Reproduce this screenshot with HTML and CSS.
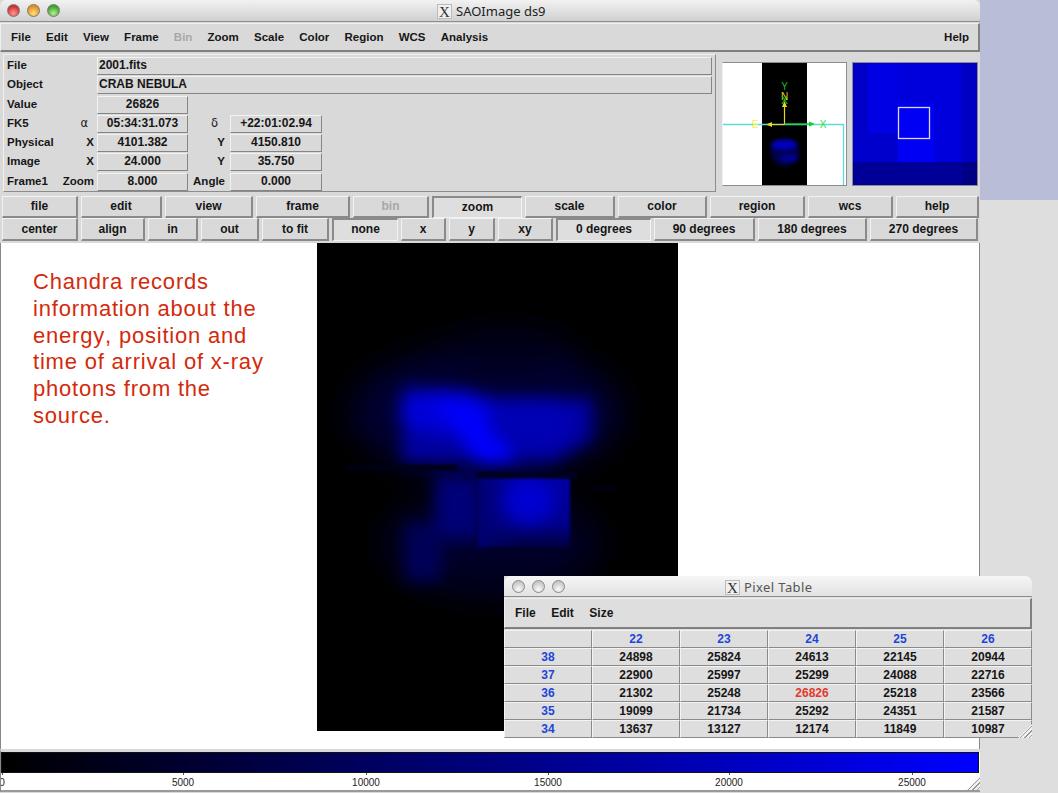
FILE: index.html
```html
<!DOCTYPE html>
<html lang="en">
<head>
  <meta charset="UTF-8">
  <title>SAOImage ds9</title>
  <link rel="stylesheet" href="styles.css">
</head>
<body>
  <div class="desk-tint"></div>

  <div class="ds9">
    <div class="titlebar">
      <span class="light red"></span><span class="light yellow"></span><span class="light green"></span>
      <div class="title"><span class="x-icon">X</span>SAOImage ds9</div>
    </div>

    <div class="menubar">
      <span>File</span><span>Edit</span><span>View</span><span>Frame</span><span class="off">Bin</span>
      <span>Zoom</span><span>Scale</span><span>Color</span><span>Region</span><span>WCS</span><span>Analysis</span>
      <span class="help">Help</span>
    </div>

    <div class="info-row">
      <div class="info">
        <div class="lab">File</div><div class="val wide left">2001.fits</div>
        <div class="lab">Object</div><div class="val wide left">CRAB NEBULA</div>
        <div class="lab">Value</div><div class="lab2"></div><div class="val">26826</div><div class="rest"></div>
        <div class="lab">FK5</div><div class="lab2 sym">&alpha;</div><div class="val">05:34:31.073</div><div class="lab3 sym">&delta;</div><div class="val">+22:01:02.94</div><div></div>
        <div class="lab">Physical</div><div class="lab2">X</div><div class="val">4101.382</div><div class="lab3">Y</div><div class="val">4150.810</div><div></div>
        <div class="lab">Image</div><div class="lab2">X</div><div class="val">24.000</div><div class="lab3">Y</div><div class="val">35.750</div><div></div>
        <div class="lab">Frame1</div><div class="lab2">Zoom</div><div class="val">8.000</div><div class="lab3">Angle</div><div class="val">0.000</div><div></div>
      </div>

      <svg class="panner" viewBox="0 0 123 122" width="123" height="122">
        <defs><filter id="soft"><feGaussianBlur stdDeviation="2"/></filter></defs>
        <rect width="123" height="122" fill="#fff"/>
        <rect x="39" width="45" height="122" fill="#000"/>
        <ellipse cx="62" cy="89" rx="14" ry="14" fill="#000050" filter="url(#soft)"/>
        <ellipse cx="61" cy="82" rx="13" ry="5" fill="#0000c0" filter="url(#soft)"/>
        <ellipse cx="66" cy="95" rx="9" ry="4" fill="#000098" filter="url(#soft)"/>
        <path d="M0 61.500H120.500V122" fill="none" stroke="#5fd8e0" stroke-width="1.300"/>
        <path d="M61.500 61.500V43M61.500 61.500H44" fill="none" stroke="#e8d820" stroke-width="1.200"/>
        <path d="M61.500 38l-2.500 6h5zM43 61.500l6-2.500v5z" fill="#e8d820"/>
        <path d="M61.500 61H87" stroke="#10d020" stroke-width="1.300"/>
        <path d="M92 61l-6-2.500v5z" fill="#10d020"/>
        <text x="61.500" y="27" class="pan-text" fill="#10c020">Y</text>
        <text x="61.500" y="37" class="pan-text" fill="#e8d820">N</text>
        <text x="61.500" y="41" class="pan-text" fill="#10d020">X</text>
        <text x="32" y="65" class="pan-text" fill="#f0f040">E</text>
        <text x="100" y="65" class="pan-text" fill="#30e040">X</text>
      </svg>

      <svg class="magnifier" viewBox="0 0 124 122" width="124" height="122">
        <rect width="124" height="122" fill="#0000dc"/>
        <rect x="0" width="15" height="100" fill="#0000c8"/>
        <rect x="15" width="30" height="70" fill="#0000e4"/>
        <rect x="108" width="16" height="100" fill="#0000c4"/>
        <rect x="45" y="40" width="36" height="59" fill="#0000f4"/>
        <rect x="0" y="70" width="45" height="29" fill="#0000cc"/>
        <rect x="0" y="99" width="124" height="23" fill="#000098"/>
        <rect x="110" y="99" width="14" height="23" fill="#000084"/>
        <rect x="45.500" y="44.500" width="31" height="31" fill="none" stroke="#d8d8e8" stroke-width="1.300"/>
      </svg>
    </div>

    <div class="btn-row row-one">
      <div class="btn">file</div><div class="btn">edit</div><div class="btn">view</div><div class="btn">frame</div>
      <div class="btn off">bin</div><div class="btn on">zoom</div><div class="btn">scale</div><div class="btn">color</div>
      <div class="btn">region</div><div class="btn">wcs</div><div class="btn">help</div>
    </div>
    <div class="btn-row row-two">
      <div class="btn">center</div><div class="btn">align</div><div class="btn">in</div><div class="btn">out</div>
      <div class="btn">to fit</div><div class="btn on">none</div><div class="btn">x</div><div class="btn">y</div>
      <div class="btn">xy</div><div class="btn on">0 degrees</div><div class="btn">90 degrees</div>
      <div class="btn">180 degrees</div><div class="btn">270 degrees</div>
    </div>

    <div class="canvas">
      <p class="note">Chandra records information about the energy, position and time of arrival of x-ray photons from the source.</p>
      <svg class="fits" viewBox="0 0 361 488" width="361" height="488">
        <defs>
          <filter id="wide" x="-40%" y="-40%" width="180%" height="180%"><feGaussianBlur stdDeviation="16"/></filter>
          <filter id="body" x="-30%" y="-30%" width="160%" height="160%"><feGaussianBlur stdDeviation="8"/></filter>
          <filter id="mid" x="-40%" y="-40%" width="180%" height="180%"><feGaussianBlur stdDeviation="8"/></filter>
          <filter id="tight" x="-10%" y="-10%" width="120%" height="120%"><feGaussianBlur stdDeviation="1.500"/></filter>
          <filter id="line" x="-5%" y="-100%" width="110%" height="300%"><feGaussianBlur stdDeviation="0.800"/></filter>
          <linearGradient id="box-fade" x1="0" y1="0" x2="0" y2="1">
            <stop offset="0" stop-color="#0000a4"/>
            <stop offset="0.650" stop-color="#00008c"/>
            <stop offset="1" stop-color="#000040"/>
          </linearGradient>
          <linearGradient id="box-side" x1="0" y1="0" x2="1" y2="0">
            <stop offset="0" stop-color="#000070" stop-opacity="1"/>
            <stop offset="0.450" stop-color="#000070" stop-opacity="0"/>
          </linearGradient>
        </defs>
        <rect width="361" height="488" fill="#000"/>
        <g filter="url(#wide)">
          <ellipse cx="170" cy="170" rx="135" ry="65" fill="#000034"/>
          <ellipse cx="175" cy="300" rx="110" ry="55" fill="#000020"/>
          <ellipse cx="190" cy="110" rx="70" ry="25" fill="#00001c"/>
        </g>
        <g filter="url(#body)">
          <path d="M85 143L166 153L275 156V196L236 219H85Z" fill="#0000a0"/>
          <ellipse cx="130" cy="168" rx="48" ry="22" fill="#0000d8"/>
          <path d="M118 158L158 162L200 220L164 222Z" fill="#0000fc"/>
          <ellipse cx="215" cy="180" rx="44" ry="26" fill="#0000b4"/>
        </g>
        <g filter="url(#mid)">
          <rect x="118" y="232" width="46" height="62" fill="#000078"/>
          <rect x="88" y="280" width="36" height="58" fill="#000058"/>
          <rect x="125" y="296" width="125" height="22" fill="#00002c"/>
        </g>
        <g filter="url(#tight)">
          <rect x="161" y="235" width="92" height="69" fill="url(#box-fade)"/>
          <rect x="161" y="235" width="92" height="69" fill="url(#box-side)"/>
        </g>
        <g filter="url(#mid)">
          <ellipse cx="212" cy="258" rx="26" ry="22" fill="#0000d0"/>
        </g>
        <g filter="url(#line)">
          <rect x="30" y="222" width="110" height="5" fill="#000018"/>
          <rect x="160" y="229" width="100" height="6" fill="#000024"/>
          <rect x="148" y="224" width="6" height="14" fill="#000050"/>
          <rect x="272" y="244" width="30" height="3" fill="#00001c"/>
        </g>
      </svg>
    </div>

    <div class="colorbar">
      <div class="ramp"></div>
      <div class="scale-labels">
        <span class="tick zero">0</span><span class="tick t5">5000</span><span class="tick t10">10000</span>
        <span class="tick t15">15000</span><span class="tick t20">20000</span><span class="tick t25">25000</span>
      </div>
      <div class="grip"></div>
    </div>
  </div>

  <div class="pixel-window">
    <div class="titlebar small">
      <span class="light gray"></span><span class="light gray"></span><span class="light gray"></span>
      <div class="title dim"><span class="x-icon">X</span>Pixel Table</div>
    </div>
    <div class="menubar pixel-menu"><span>File</span><span>Edit</span><span>Size</span></div>
    <div class="pixel-grid">
      <div class="cell"></div><div class="cell head">22</div><div class="cell head">23</div><div class="cell head">24</div><div class="cell head">25</div><div class="cell head">26</div>
      <div class="cell head">38</div><div class="cell">24898</div><div class="cell">25824</div><div class="cell">24613</div><div class="cell">22145</div><div class="cell">20944</div>
      <div class="cell head">37</div><div class="cell">22900</div><div class="cell">25997</div><div class="cell">25299</div><div class="cell">24088</div><div class="cell">22716</div>
      <div class="cell head">36</div><div class="cell">21302</div><div class="cell">25248</div><div class="cell hit">26826</div><div class="cell">25218</div><div class="cell">23566</div>
      <div class="cell head">35</div><div class="cell">19099</div><div class="cell">21734</div><div class="cell">25292</div><div class="cell">24351</div><div class="cell">21587</div>
      <div class="cell head">34</div><div class="cell">13637</div><div class="cell">13127</div><div class="cell">12174</div><div class="cell">11849</div><div class="cell">10987</div>
    </div>
    <div class="grip"></div>
  </div>
</body>
</html>
```

FILE: styles.css
```css
* {
  box-sizing: border-box;
}
body {
  margin: 0;
  width: 1058px;
  height: 793px;
  position: relative;
  overflow: hidden;
  background: #dedede;
  font-family: "Liberation Sans", Arial, sans-serif;
  font-size: 12px;
  font-weight: bold;
  color: #161616;
}
.desk-tint {
  position: absolute;
  top: 0;
  right: 0;
  width: 78px;
  height: 200px;
  background: #b9bdd8;
}

/* main window */
.ds9 {
  position: relative;
  width: 980px;
  height: 793px;
  background: #d9d9d9;
  display: flex;
  flex-direction: column;
}
.titlebar {
  height: 22px;
  display: flex;
  align-items: center;
  gap: 7px;
  padding-left: 7px;
  position: relative;
  background: linear-gradient(#f2f2f2, #d0d0d0);
  border-bottom: 1px solid #8e8e8e;
  border-radius: 6px 6px 0 0;
}
.light {
  width: 13px;
  height: 13px;
  border-radius: 50%;
  border: 1px solid #777;
}
.red { background: radial-gradient(circle at 50% 75%, #ff9a90, #cf3030 70%); }
.yellow { background: radial-gradient(circle at 50% 75%, #ffdf80, #e09020 70%); }
.green { background: radial-gradient(circle at 50% 75%, #b8f090, #3fa030 70%); }
.gray { background: radial-gradient(circle at 50% 75%, #fafafa, #c8c8c8 70%); border-color: #8a8a8a; }
.title {
  position: absolute;
  left: 437px;
  top: 3px;
  display: flex;
  align-items: center;
  gap: 4px;
  font-family: "Noto Sans", sans-serif;
  font-size: 13px;
  font-weight: normal;
  line-height: 16px;
  color: #222;
}
.title.dim {
  color: #555;
  left: 221px;
  letter-spacing: 0.400px;
}
.x-icon {
  width: 15px;
  height: 15px;
  font-family: "Liberation Serif", serif;
  font-size: 15px;
  line-height: 15px;
  text-align: center;
  letter-spacing: 0;
  color: #333;
  background: #f0f0f0;
  border: 1px solid #bbb;
}
.menubar {
  height: 29px;
  margin-top: 1px;
  display: flex;
  align-items: center;
  gap: 15.200px;
  padding: 0 9px 0 10px;
  font-size: 11.500px;
  background: #d9d9d9;
  border: 1px solid;
  border-width: 1px 2px 2px 1px;
  border-color: #efefef #808080 #808080 #efefef;
}
.off {
  color: #a8a8a8;
}
.help {
  margin-left: auto;
}

/* info panel */
.info-row {
  display: flex;
  height: 144px;
  padding: 2px 2px 0 3px;
}
.info {
  width: 713px;
  height: 138px;
  padding: 2px 3px 0 1px;
  border: 1px solid;
  border-color: #f0f0f0 #8c8c8c #8c8c8c #f0f0f0;
  display: grid;
  grid-template-columns: 55px 37px 91px 42px 92px 1fr;
  grid-auto-rows: 18px;
  row-gap: 1.300px;
  align-items: stretch;
}
.lab {
  padding-left: 2px;
  line-height: 17px;
  font-size: 11.500px;
}
.lab2, .lab3 {
  text-align: right;
  padding-right: 3px;
  line-height: 17px;
  font-size: 11.500px;
}
.lab3 {
  padding-right: 5px;
}
.sym {
  font-family: "DejaVu Sans", sans-serif;
  font-weight: normal;
  padding-right: 9px;
}
.lab3.sym {
  padding-right: 12px;
}
.rest {
  grid-column: 4 / -1;
}
.val {
  background: #d9d9d9;
  border: 1px solid;
  border-color: #f2f2f2 #858585 #858585 #f2f2f2;
  text-align: center;
  line-height: 15px;
}
.val.wide {
  grid-column: 2 / -1;
  margin-left: 37px;
}
.val.left {
  text-align: left;
  padding-left: 1px;
}
.panner {
  margin: 8px 0 0 6px;
  border: 1px solid;
  border-color: #8c8c8c #8c8c8c #8c8c8c #f0f0f0;
  width: 125px;
  height: 124px;
  flex: none;
}
.pan-text {
  font-size: 10px;
  font-weight: normal;
  text-anchor: middle;
}
.magnifier {
  margin: 8px 0 0 5px;
  border: 1px solid #8c8c8c;
  width: 126px;
  height: 124px;
  flex: none;
}

/* button rows */
.btn-row {
  display: grid;
  column-gap: 3px;
  height: 21px;
  padding: 0 2px;
  margin-bottom: 1px;
}
.row-one {
  grid-template-columns: 76px 81px 88px 94px 76px 90px 90px 89px 95px 85px 83px;
}
.row-two {
  grid-template-columns: 76px 64px 50px 58px 67px 66px 45px 46px 55px 95px 101px 109px 108px;
}
.btn {
  background: #d9d9d9;
  border: 1px solid;
  border-width: 1px 2px 2px 1px;
  border-color: #f2f2f2 #8a8a8a #8a8a8a #f2f2f2;
  text-align: center;
  line-height: 19px;
}
.row-two .btn {
  line-height: 20px;
}
.btn.on, .row-two .btn.on {
  background: #dedede;
  border-width: 2px 1px 1px 2px;
  border-color: #8a8a8a #f2f2f2 #f2f2f2 #8a8a8a;
  line-height: 18px;
}

/* image area */
.canvas {
  height: 506px;
  margin-top: 3px;
  background: #fff;
  border-right: 1px solid #888;
  border-left: 1px solid #888;
  position: relative;
  overflow: hidden;
}
.note {
  margin: 0;
  width: 240px;
  padding: 26px 0 0 32px;
  box-sizing: content-box;
  font-size: 22px;
  line-height: 26.800px;
  letter-spacing: 0.800px;
  font-kerning: none;
  font-weight: normal;
  color: #d42a0c;
}
.fits {
  position: absolute;
  top: 0;
  left: 316px;
}
.colorbar {
  height: 43px;
  background: #fff;
  position: relative;
  border-top: 3px solid #d9d9d9;
  border-bottom: 2px solid #999;
  border-left: 1px solid #888;
}
.ramp {
  height: 21px;
  margin-right: 1px;
  background: linear-gradient(90deg, #000, #0000ff);
  border: 1px solid #111;
}
.scale-labels {
  position: relative;
  height: 17px;
  font-size: 10px;
  font-weight: normal;
  color: #222;
  overflow: hidden;
}
.tick {
  position: absolute;
  top: 0;
  padding-top: 4px;
  width: 50px;
  margin-left: -25px;
  text-align: center;
  line-height: 12px;
}
.tick::before {
  content: "";
  position: absolute;
  top: 0;
  left: 25px;
  width: 1px;
  height: 2px;
  background: #555;
}
.zero { left: 1px; }
.t5 { left: 182px; }
.t10 { left: 365px; }
.t15 { left: 547px; }
.t20 { left: 728px; }
.t25 { left: 911px; }
.grip {
  position: absolute;
  right: 0;
  bottom: 0;
  width: 14px;
  height: 14px;
  background: repeating-linear-gradient(135deg, #f0f0f0 0 2px, #9a9a9a 2px 3px);
  clip-path: polygon(100% 0, 100% 100%, 0 100%);
}

/* pixel table */
.pixel-window {
  position: absolute;
  left: 504px;
  top: 576px;
  width: 528px;
  height: 162px;
  background: #dedede;
}
.titlebar.small {
  height: 21px;
  gap: 7px;
  padding-left: 8px;
  border-radius: 7px 7px 0 0;
  background: linear-gradient(#f6f6f6, #e2e2e2);
}
.pixel-menu {
  height: 31px;
  margin-top: 1px;
  gap: 15.500px;
  padding-left: 10px;
  font-size: 12px;
  background: #dedede;
}
.pixel-grid {
  display: grid;
  grid-template-columns: repeat(6, 88px);
  grid-auto-rows: 18px;
  margin-top: 1px;
}
.cell {
  border: 1px solid;
  border-color: #f4f4f4 #8a8a8a #8a8a8a #f4f4f4;
  text-align: center;
  line-height: 16px;
}
.cell.head {
  color: #1c46d8;
}
.cell.hit {
  color: #e23a2c;
}
```
